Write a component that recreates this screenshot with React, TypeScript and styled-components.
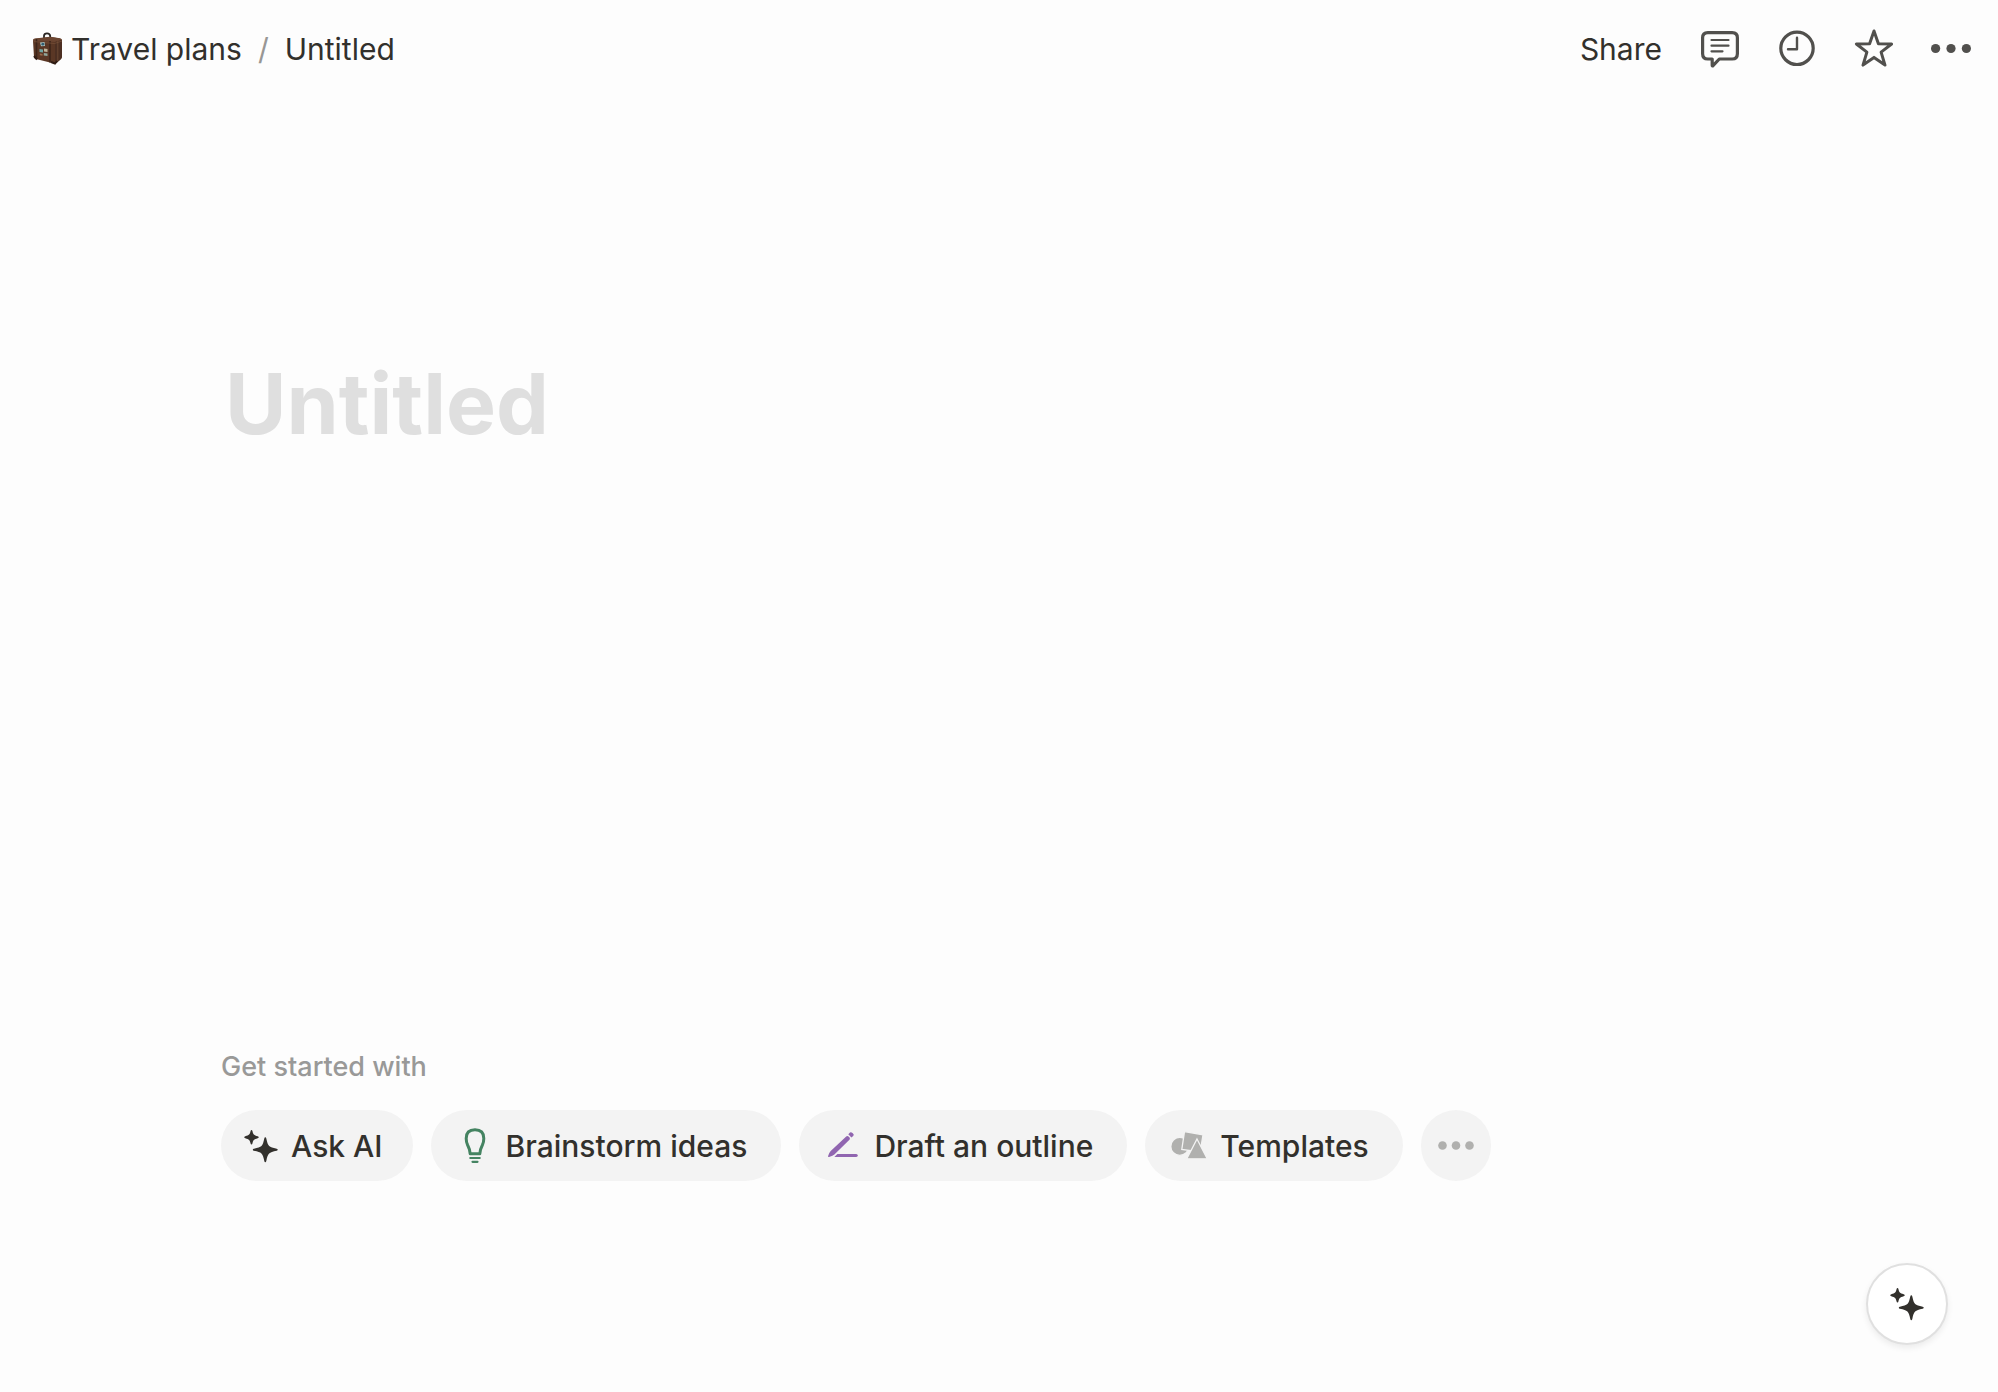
import React from "react";
import styled, { createGlobalStyle, css } from "styled-components";

const ink = "#32302c";
const iconGray = "#51504d";

const GlobalStyle = createGlobalStyle`
  *, *::before, *::after { box-sizing: border-box; }
  body {
    margin: 0;
    background: #fdfdfd;
    color: ${ink};
    font-family: Inter, "Liberation Sans", sans-serif;
    font-size: 30px;
    line-height: 40px;
  }
  button, input { font: inherit; color: inherit; }
`;

const Page = styled.div`
  display: flex;
  flex-direction: column;
  min-height: 100vh;
`;

const TopBar = styled.header`
  display: flex;
  align-items: center;
  justify-content: space-between;
  height: 98px;
  padding: 0 25px 0 32px;
`;

const Breadcrumb = styled.nav`
  display: flex;
  align-items: center;
`;

const Crumb = styled.a`
  display: flex;
  align-items: center;
  gap: 7px;
  color: ${ink};
  text-decoration: none;
`;

const Separator = styled.span`
  padding: 0 16px;
  color: #989795;
`;

const Actions = styled.div`
  display: flex;
  align-items: center;
  gap: 36px;
`;

const ActionIcons = styled.div`
  display: flex;
  align-items: center;
  gap: 33px;
`;

const PlainButton = styled.button`
  display: flex;
  align-items: center;
  justify-content: center;
  padding: 0;
  border: 0;
  background: none;
  cursor: pointer;
`;

const IconButton = styled(PlainButton)`
  width: 44px;
  height: 44px;
  color: ${iconGray};
`;

const Main = styled.main`
  display: flex;
  flex: 1;
  flex-direction: column;
  justify-content: space-between;
  padding: 250px 221px 211px;
`;

const TitleInput = styled.input`
  width: 100%;
  height: 112px;
  padding: 0 4px;
  border: 0;
  outline: 0;
  background: transparent;
  font-size: 84px;
  font-weight: 700;
  line-height: 112px;

  &::placeholder {
    color: #dfdfdf;
    opacity: 1;
  }
`;

const Starter = styled.section`
  display: flex;
  flex-direction: column;
  gap: 25px;
`;

const StarterHeading = styled.h2`
  margin: 0;
  color: #999998;
  font-size: 27px;
  font-weight: 500;
  line-height: 36px;
`;

const Pills = styled.div`
  display: flex;
  flex-wrap: wrap;
  gap: 18px;
`;

const Pill = styled(PlainButton)<{ $tight?: boolean; $round?: boolean }>`
  gap: ${(p) => (p.$tight ? 12 : 13)}px;
  height: 71px;
  padding: ${(p) => (p.$tight ? "0 30px 0 22px" : "0 34px 0 26px")};
  border-radius: 36px;
  background: #f3f3f3;
  font-weight: 500;
  white-space: nowrap;
  ${(p) =>
    p.$round &&
    css`
      width: 70px;
      padding: 0;
      color: #b0b0ae;
    `}
`;

const AssistantButton = styled(PlainButton)`
  position: fixed;
  right: 50px;
  bottom: 47px;
  width: 82px;
  height: 82px;
  border: 2px solid #e0e0e0;
  border-radius: 50%;
  background: #fff;
  box-shadow: 0 3px 6px rgba(0, 0, 0, 0.07);
`;

const Glyph = styled.svg`
  flex: none;
  display: block;
`;

const Suitcase = () => (
  <Glyph width="32" height="34" viewBox="0 0 32 34" aria-hidden="true">
    <path d="M12 6V3.8Q12.2 1.3 15 1.3Q18 1.3 18.2 4V7" fill="none" stroke="#292522" strokeWidth="1.8" />
    <path d="M3 6.8Q1 6.8 1 9L2 25Q2 26.3 4 27L22 31.5Q23.5 32 25 30.5L29 27Q30 26 30 24V9Q30 7 28 6.5L19 5Z" fill="#5a3725" />
    <path d="M1 8.8Q1 6.5 3 6.5L18 4.8L28 6.3Q30 6.8 30 8L23 10Z" fill="#6b4531" />
    <path d="M23 10L30 8V24Q30 26 29 27L25 30.5Q24 31.5 23 31.5Z" fill="#4c2f22" />
    <path d="M4.5 7V27M18 9V30.5" stroke="#3c251a" strokeWidth="1.6" />
    <path d="M1.5 9.5L22.5 11.5L30 9M25.8 9V29" fill="none" stroke="#7a513a" strokeWidth="0.7" />
    <path d="M2 24L5 27.5M19 30L23 31.5L25 29" fill="none" stroke="#2f1c14" strokeWidth="2" />
    <path d="M8 10.5L12.5 10L13 14L9 14.3Z" fill="#a9c0bd" />
    <circle cx="10.8" cy="12.2" r="1.4" fill="#315f73" />
    <path d="M7.5 17L11 17.4V20.5L7.5 20Z" fill="#6fa6a3" />
    <path d="M12 16.5L15.5 17V20L12 19.6Z" fill="#c0b69c" />
    <path d="M11.8 21L15.5 21.5V24L11.8 23.5Z" fill="#91a79b" />
    <path d="M7.8 21.5L10.5 22V23.8L7.8 23.3Z" fill="#9a6a4b" />
  </Glyph>
);

const CommentIcon = () => (
  <Glyph width="44" height="44" viewBox="0 0 44 44" fill="none" stroke="currentColor" strokeLinecap="round" strokeLinejoin="round" aria-hidden="true">
    <path strokeWidth="3.2" d="M9.8 5.6H34.2Q39.4 5.6 39.4 10.8V26.8Q39.4 32 34.2 32H21.3L15 38.7Q14.2 39.4 14.2 38.2V32H9.8Q4.6 32 4.6 26.8V10.8Q4.6 5.6 9.8 5.6Z" />
    <path strokeWidth="2.2" d="M13.5 13H30.5M13.5 18.7H30.5M13.5 24.3H24.5" />
  </Glyph>
);

const ClockIcon = () => (
  <Glyph width="44" height="44" viewBox="0 0 44 44" fill="none" stroke="currentColor" strokeLinecap="round" strokeLinejoin="round" aria-hidden="true">
    <circle cx="22" cy="21.3" r="16.2" strokeWidth="3.2" />
    <path strokeWidth="2.4" d="M22 10.8V22.3H13" />
  </Glyph>
);

const StarIcon = () => (
  <Glyph width="44" height="44" viewBox="0 0 44 44" fill="none" stroke="currentColor" strokeWidth="3" strokeLinejoin="round" aria-hidden="true">
    <path d="M22 4L26.4 16.7L39.6 17L29.1 25.1L33 38.1L22 30.4L11 38.1L14.9 25.1L4.4 17L17.6 16.7Z" />
  </Glyph>
);

const MoreIcon = ({ radius, spread }: { radius: number; spread: number }) => (
  <Glyph width="44" height="44" viewBox="0 0 44 44" fill="currentColor" aria-hidden="true">
    <circle cx={22 - spread} cy="21.5" r={radius} />
    <circle cx="22" cy="21.5" r={radius} />
    <circle cx={22 + spread} cy="21.5" r={radius} />
  </Glyph>
);

const SparkleIcon = () => (
  <Glyph width="36" height="36" viewBox="0 0 36 36" fill={ink} aria-hidden="true">
    <path d="M8.5 2Q9.2 2 9.4 3.1C10.3 6.7 10.8 7.2 14.7 8.3Q15.8 8.7 15.8 9.3T14.7 10.3C10.8 11.4 10.3 12 9.4 15.5Q9.2 16.6 8.5 16.6T7.6 15.5C6.7 12 6.2 11.4 2.3 10.3Q1.2 9.9 1.2 9.3T2.3 8.3C6.2 7.2 6.7 6.7 7.6 3.1Q7.8 2 8.5 2Z" />
    <path d="M22.3 9.3Q23 9.3 23.3 10.5C25 18.3 25.8 19.1 33.7 20.7Q34.8 21 34.8 21.7T33.7 22.8C25.8 24.4 25 25.2 23.3 33Q23 34.2 22.3 34.2T21.3 33C19.6 25.2 18.8 24.4 10.9 22.8Q9.8 22.5 9.8 21.7T10.9 20.7C18.8 19.1 19.6 18.3 21.3 10.5Q21.6 9.3 22.3 9.3Z" />
  </Glyph>
);

const BulbIcon = () => (
  <Glyph width="36" height="36" viewBox="0 1 36 36" fill="none" stroke="#448361" aria-hidden="true">
    <path strokeWidth="3" strokeLinejoin="round" d="M13.2 26.8Q12.7 21.9 10.6 18Q9.2 15 9.2 11.4Q9.2 2.8 18 2.8T26.8 11.4Q26.8 15 25.4 18Q23.3 21.9 22.8 26.8Z" />
    <path strokeWidth="2.2" strokeLinecap="round" d="M13.3 31H22.7M15.5 34.8H20.5" />
  </Glyph>
);

const PencilIcon = () => (
  <Glyph width="36" height="36" viewBox="0 1 36 36" fill="#9065b0" aria-hidden="true">
    <path d="M21.2 9.4Q22.3 8.4 23.9 9.8T24.7 12.4L9.4 27.6Q8 28.9 4.1 30Q2.7 30.3 3.1 28.9Q4.2 25.3 5.7 23.9Z" />
    <path d="M23.3 7.3L25 5.4Q26 4.6 27.8 6.2T28.2 9L26.4 10.6Z" />
    <path d="M12.4 27H31.2Q32.8 27.1 32.8 28.5T31.2 30H9.4Z" />
  </Glyph>
);

const ShapesIcon = () => (
  <Glyph width="36" height="36" viewBox="0 0 36 36" fill="#b0b0ae" stroke="#f3f3f3" strokeWidth="1.3" aria-hidden="true">
    <circle cx="8.8" cy="18.4" r="9" />
    <path d="M13.5 3.6L32 6.8L29.2 24L10.8 21.4Z" />
    <path d="M26 11L36.2 30.8H15.8Z" />
  </Glyph>
);

export default function App() {
  return (
    <Page>
      <GlobalStyle />
      <TopBar>
        <Breadcrumb aria-label="Breadcrumb">
          <Crumb href="#travel-plans">
            <Suitcase />
            Travel plans
          </Crumb>
          <Separator>/</Separator>
          <Crumb href="#untitled">Untitled</Crumb>
        </Breadcrumb>
        <Actions>
          <PlainButton type="button">Share</PlainButton>
          <ActionIcons>
            <IconButton type="button" aria-label="Comments"><CommentIcon /></IconButton>
            <IconButton type="button" aria-label="History"><ClockIcon /></IconButton>
            <IconButton type="button" aria-label="Favorite"><StarIcon /></IconButton>
            <IconButton type="button" aria-label="More"><MoreIcon radius={4.6} spread={15.4} /></IconButton>
          </ActionIcons>
        </Actions>
      </TopBar>
      <Main>
        <TitleInput type="text" placeholder="Untitled" aria-label="Page title" />
        <Starter>
          <StarterHeading>Get started with</StarterHeading>
          <Pills>
            <Pill type="button" $tight><SparkleIcon />Ask AI</Pill>
            <Pill type="button"><BulbIcon />Brainstorm ideas</Pill>
            <Pill type="button"><PencilIcon />Draft an outline</Pill>
            <Pill type="button"><ShapesIcon />Templates</Pill>
            <Pill type="button" $round aria-label="More options"><MoreIcon radius={4.3} spread={13.5} /></Pill>
          </Pills>
        </Starter>
      </Main>
      <AssistantButton type="button" aria-label="Open assistant"><SparkleIcon /></AssistantButton>
    </Page>
  );
}
